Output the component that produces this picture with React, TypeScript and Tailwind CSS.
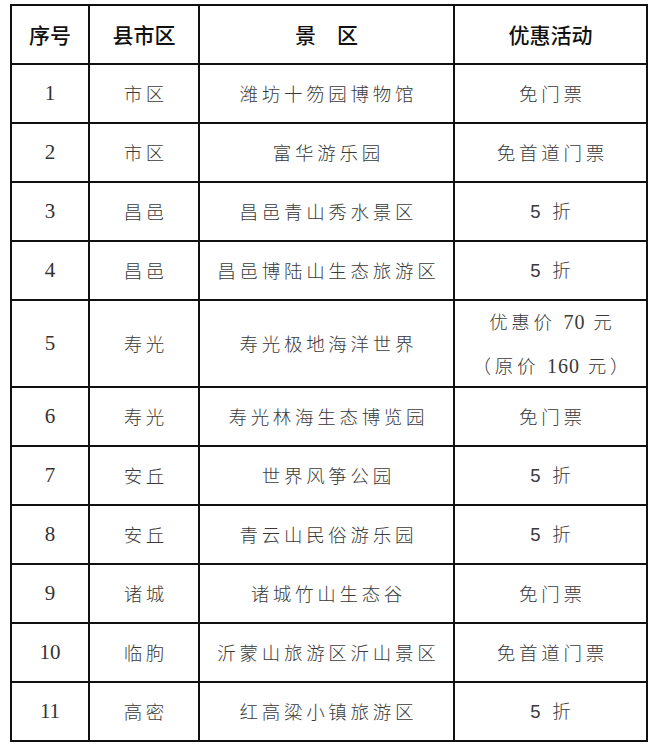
import React from 'react';

type Row = {
  no: string;
  county: string;
  spot: string;
  offer: React.ReactNode;
  tall?: boolean;
};

const five = (
  <>
    <span className="font-['Liberation_Sans']">5</span> 折
  </>
);

const rows: Row[] = [
  { no: '1', county: '市区', spot: '潍坊十笏园博物馆', offer: '免门票' },
  { no: '2', county: '市区', spot: '富华游乐园', offer: '免首道门票' },
  { no: '3', county: '昌邑', spot: '昌邑青山秀水景区', offer: five },
  { no: '4', county: '昌邑', spot: '昌邑博陆山生态旅游区', offer: five },
  {
    no: '5',
    county: '寿光',
    spot: '寿光极地海洋世界',
    tall: true,
    offer: (
      <div className="flex flex-col items-center gap-[14px]">
        <span>
          优惠价 <span className="font-['Liberation_Serif'] text-[20px] tracking-[0.05em]">70</span> 元
        </span>
        <span>
          （原价 <span className="font-['Liberation_Serif'] text-[20px] tracking-[0.05em]">160</span> 元）
        </span>
      </div>
    ),
  },
  { no: '6', county: '寿光', spot: '寿光林海生态博览园', offer: '免门票' },
  { no: '7', county: '安丘', spot: '世界风筝公园', offer: five },
  { no: '8', county: '安丘', spot: '青云山民俗游乐园', offer: five },
  { no: '9', county: '诸城', spot: '诸城竹山生态谷', offer: '免门票' },
  { no: '10', county: '临朐', spot: '沂蒙山旅游区沂山景区', offer: '免首道门票' },
  { no: '11', county: '高密', spot: '红高粱小镇旅游区', offer: five },
];

const cell = 'border-2 border-[#111] text-center align-middle p-0';
const bodyText =
  "font-['Noto_Sans_CJK_SC',sans-serif] font-light text-[18.5px] text-[#3a3a3a] tracking-[0.2em] pl-[0.2em]";

export default function App() {
  return (
    <div className="min-h-[749px] w-[656px] bg-white pl-[10px] pt-[4px]">
      <table className="w-[636px] table-fixed border-collapse">
        <colgroup>
          <col className="w-[78px]" />
          <col className="w-[110px]" />
          <col className="w-[255px]" />
          <col className="w-[193px]" />
        </colgroup>
        <thead>
          <tr className="h-[59px] font-['Noto_Sans_CJK_SC',sans-serif] text-[21px] text-[#111]">
            <th className={`${cell} font-medium`}>序号</th>
            <th className={`${cell} font-medium`}>县市区</th>
            <th className={`${cell} font-medium`}>
              <span className="tracking-[1em] pl-[1em]">景区</span>
            </th>
            <th className={`${cell} font-medium`}>优惠活动</th>
          </tr>
        </thead>
        <tbody>
          {rows.map((r) => (
            <tr key={r.no} className={r.tall ? 'h-[87px]' : 'h-[59px]'}>
              <td className={`${cell} font-['Liberation_Serif',serif] text-[21px] text-[#333]`}>{r.no}</td>
              <td className={`${cell} ${bodyText}`}>{r.county}</td>
              <td className={`${cell} ${bodyText}`}>{r.spot}</td>
              <td className={`${cell} ${bodyText}`}>{r.offer}</td>
            </tr>
          ))}
        </tbody>
      </table>
    </div>
  );
}
